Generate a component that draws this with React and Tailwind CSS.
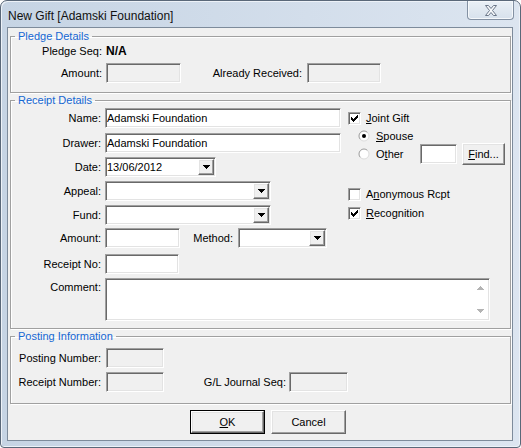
const SUNKEN =
  'border border-t-[#a0a0a0] border-l-[#a0a0a0] border-b-white border-r-white shadow-[inset_1px_1px_0_#696969,inset_-1px_-1px_0_#e3e3e3]'
const RAISED =
  'border border-t-white border-l-white border-b-[#696969] border-r-[#696969] shadow-[inset_-1px_-1px_0_#a0a0a0,inset_1px_1px_0_#e3e3e3]'

function DropArrow({ color = '#000' }) {
  return (
    <svg width="7" height="4" viewBox="0 0 7 4" shapeRendering="crispEdges">
      <path d="M0 0h7v1h-1v1h-1v1h-1v1h-1v-1h-1v-1h-1v-1h-1z" fill={color} />
    </svg>
  )
}

function TextBox({ className = '', value, disabled }) {
  return (
    <div className={`${SUNKEN} p-[1px] h-[20px] ${disabled ? 'bg-[#f0f0f0]' : 'bg-white'} ${className}`}>
      <span className="block leading-[16px] whitespace-nowrap">{value}</span>
    </div>
  )
}

function Combo({ className = '', value }) {
  return (
    <div className={`${SUNKEN} p-[1px] h-[20px] bg-white flex ${className}`}>
      <span className="flex-1 leading-[16px] whitespace-nowrap">{value}</span>
      <span className={`${RAISED} bg-[#f0f0f0] w-[16px] h-[16px] flex items-center justify-center`}>
        <DropArrow />
      </span>
    </div>
  )
}

function CheckBox({ checked }) {
  return (
    <span className={`${SUNKEN} bg-white w-[13px] h-[13px] flex items-center justify-center shrink-0`}>
      {checked && (
        <svg width="7" height="7" viewBox="0 0 7 7" shapeRendering="crispEdges">
          <path d="M6 0h1v3h-1v1h-1v1h-1v1h-1v1h-1v-1h-1v-1h-1v-3h1v1h1v1h1v-1h1v-1h1v-1h1z" fill="#000" />
        </svg>
      )}
    </span>
  )
}

function Radio({ checked }) {
  return (
    <svg width="12" height="12" viewBox="0 0 12 12" className="shrink-0">
      <circle cx="6" cy="6" r="5" fill="#fff" />
      <path d="M2.46 9.54A5 5 0 0 1 9.54 2.46" fill="none" stroke="#9a9a9a" />
      <path d="M9.54 2.46A5 5 0 0 1 2.46 9.54" fill="none" stroke="#dcdcdc" />
      {checked && <circle cx="6" cy="6" r="2" fill="#000" />}
    </svg>
  )
}

function Group({ title, className = '', children }) {
  return (
    <fieldset
      className={`ml-[2px] w-[501px] border border-[#a0a0a0] shadow-[inset_1px_1px_0_#fff,1px_1px_0_#fff] ${className}`}
    >
      <legend className="ml-[4px] px-[3px] leading-[13px] text-[#1567d3]">{title}</legend>
      {children}
    </fieldset>
  )
}

function Label({ className = '', children }) {
  return <span className={`text-right whitespace-nowrap shrink-0 ${className}`}>{children}</span>
}

export default function App() {
  return (
    <div className="w-[521px] h-[448px] font-['Liberation_Sans',Arial,sans-serif] text-[11px] leading-[13px] text-black">
      <div className="w-full h-full flex flex-col border border-[#5a6879] rounded-t-[7px] rounded-b-[4px] bg-linear-to-r from-[#c6d4e4] to-[#dce5f0] shadow-[inset_1px_1px_0_#edf2f8,inset_-1px_-1px_0_#edf2f8] pl-[6px] pr-[7px] pb-[6px]">
        {/* title bar */}
        <div className="h-[26px] flex items-start justify-between shrink-0">
          <div className="pl-[1px] pt-[7px] text-[12px] leading-[16px] text-[#111]">
            New Gift [Adamski Foundation]
          </div>
          <div className="w-[47px] h-[19px] -mr-[1px] rounded-b-[4px] border border-t-0 border-[#8391a3] bg-linear-to-b from-[#eaf0f6] to-[#d7e1ec] shadow-[inset_0_0_0_1px_#f5f8fb] flex items-center justify-center">
            <svg width="12" height="11" viewBox="0 0 12 11">
              <path
                d="M0.5 0.5h3l2.5 3 2.5-3h3l-4 5 4 5h-3l-2.5-3-2.5 3h-3l4-5z"
                fill="#f7f9fb"
                stroke="#6b7789"
                strokeLinejoin="round"
              />
            </svg>
          </div>
        </div>

        {/* client area */}
        <div className="flex-1 border border-[#7d8b9b] bg-[#f0f0f0] flex flex-col">
          <Group title="Pledge Details" className="mt-[2px] h-[63px]">
            <div className="flex items-center h-[16px]">
              <Label className="w-[91px]">Pledge Seq:</Label>
              <span className="ml-[4px] font-bold text-[12px]">N/A</span>
            </div>
            <div className="flex items-center mt-[4px] h-[20px]">
              <Label className="w-[91px]">Amount:</Label>
              <TextBox disabled className="ml-[4px] w-[75px]" />
              <Label className="w-[121px]">Already Received:</Label>
              <TextBox disabled className="ml-[5px] w-[74px]" />
            </div>
          </Group>

          <Group title="Receipt Details" className="mt-[1px] h-[235px]">
            <div className="flex">
              <div className="w-[337px] shrink-0">
                <div className="flex items-center mt-[1px] h-[20px]">
                  <Label className="w-[90px]">Name:</Label>
                  <TextBox className="ml-[4px] w-[236px]" value="Adamski Foundation" />
                </div>
                <div className="flex items-center mt-[5px] h-[20px]">
                  <Label className="w-[90px]">Drawer:</Label>
                  <TextBox className="ml-[4px] w-[236px]" value="Adamski Foundation" />
                </div>
                <div className="flex items-center mt-[4px] h-[20px]">
                  <Label className="w-[90px]">Date:</Label>
                  <Combo className="ml-[4px] w-[111px]" value="13/06/2012" />
                </div>
                <div className="flex items-center mt-[4px] h-[20px]">
                  <Label className="w-[90px]">Appeal:</Label>
                  <Combo className="ml-[4px] w-[166px]" />
                </div>
                <div className="flex items-center mt-[4px] h-[20px]">
                  <Label className="w-[90px]">Fund:</Label>
                  <Combo className="ml-[4px] w-[166px]" />
                </div>
                <div className="flex items-center mt-[3px] h-[20px]">
                  <Label className="w-[90px]">Amount:</Label>
                  <TextBox className="ml-[4px] w-[75px]" />
                  <Label className="w-[53px]">Method:</Label>
                  <Combo className="ml-[5px] w-[89px]" />
                </div>
                <div className="flex items-center mt-[6px] h-[20px]">
                  <Label className="w-[90px]">Receipt No:</Label>
                  <TextBox className="ml-[4px] w-[74px]" />
                </div>
              </div>

              <div className="flex flex-col">
                <div className="flex items-center mt-[3px] h-[16px]">
                  <CheckBox checked />
                  <span className="ml-[5px]">
                    <span className="underline">J</span>oint Gift
                  </span>
                </div>
                <div className="flex items-center mt-[3px] h-[14px] pl-[10px]">
                  <Radio checked />
                  <span className="ml-[6px]">
                    <span className="underline">S</span>pouse
                  </span>
                </div>
                <div className="flex items-center h-[22px] pl-[10px]">
                  <Radio />
                  <span className="ml-[6px] w-[44px]">
                    O<span className="underline">t</span>her
                  </span>
                  <TextBox className="w-[37px]" />
                  <div className={`${RAISED} bg-[#f0f0f0] ml-[5px] w-[43px] h-[22px] flex items-center justify-center`}>
                    <span>
                      <span className="underline">F</span>ind...
                    </span>
                  </div>
                </div>
                <div className="flex items-center mt-[21px] h-[16px]">
                  <CheckBox />
                  <span className="ml-[5px]">
                    A<span className="underline">n</span>onymous Rcpt
                  </span>
                </div>
                <div className="flex items-center mt-[3px] h-[16px]">
                  <CheckBox checked />
                  <span className="ml-[5px]">
                    <span className="underline">R</span>ecognition
                  </span>
                </div>
              </div>
            </div>

            <div className="flex items-start mt-[4px]">
              <Label className="w-[90px] pt-[3px]">Comment:</Label>
              <div className={`${SUNKEN} ml-[4px] w-[385px] h-[43px] bg-white flex justify-end`}>
                <div className="w-[17px] flex flex-col items-center justify-between py-[7px]">
                  <svg width="7" height="4" viewBox="0 0 7 4" shapeRendering="crispEdges">
                    <path d="M3 0h1v1h1v1h1v1h1v1h-7v-1h1v-1h1v-1h1z" fill="#b4b4b4" />
                  </svg>
                  <DropArrow color="#b4b4b4" />
                </div>
              </div>
            </div>
          </Group>

          <Group title="Posting Information" className="mt-[1px] h-[74px]">
            <div className="flex items-center mt-[5px] h-[20px]">
              <Label className="w-[90px]">Posting Number:</Label>
              <TextBox disabled className="ml-[5px] w-[58px]" />
            </div>
            <div className="flex items-center mt-[4px] h-[20px]">
              <Label className="w-[90px]">Receipt Number:</Label>
              <TextBox disabled className="ml-[5px] w-[58px]" />
              <Label className="w-[122px]">G/L Journal Seq:</Label>
              <TextBox disabled className="ml-[3px] w-[59px]" />
            </div>
          </Group>

          <div className="flex mt-[6px] pl-[182px] gap-[6px]">
            <div className="w-[75px] h-[24px] border border-black">
              <div className={`${RAISED} h-full bg-[#f0f0f0] flex items-center justify-center`}>
                <span>
                  <span className="underline">O</span>K
                </span>
              </div>
            </div>
            <div className={`${RAISED} w-[75px] h-[24px] bg-[#f0f0f0] flex items-center justify-center`}>
              Cancel
            </div>
          </div>
        </div>
      </div>
    </div>
  )
}
